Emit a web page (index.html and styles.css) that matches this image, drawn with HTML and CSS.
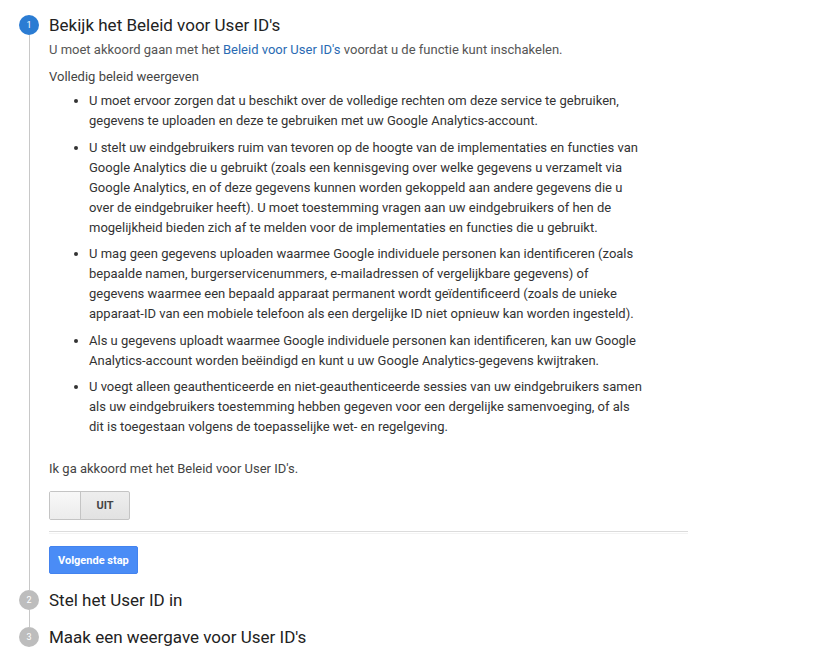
FILE: index.html
```html
<!DOCTYPE html>
<html lang="nl">
<head>
    <meta charset="UTF-8">
    <title>User ID instellen</title>
    <link rel="stylesheet" href="styles.css">
</head>
<body>
<div class="steps">
    <div class="step">
        <div class="rail">
            <span class="num active">1</span>
            <span class="line"></span>
        </div>
        <div class="body">
            <h2 class="title">Bekijk het Beleid voor User ID's</h2>
            <p class="intro">U moet akkoord gaan met het <a href="#">Beleid voor User ID's</a> voordat u de functie kunt inschakelen.</p>
            <p class="full">Volledig beleid weergeven</p>
            <ul class="policy">
                <li>U moet ervoor zorgen dat u beschikt over de volledige rechten om deze service te gebruiken, gegevens te uploaden en deze te gebruiken met uw Google Analytics-account.</li>
                <li>U stelt uw eindgebruikers ruim van tevoren op de hoogte van de implementaties en functies van Google Analytics die u gebruikt (zoals een kennisgeving over welke gegevens u verzamelt via Google Analytics, en of deze gegevens kunnen worden gekoppeld aan andere gegevens die u over de eindgebruiker heeft). U moet toestemming vragen aan uw eindgebruikers of hen de mogelijkheid bieden zich af te melden voor de implementaties en functies die u gebruikt.</li>
                <li>U mag geen gegevens uploaden waarmee Google individuele personen kan identificeren (zoals bepaalde namen, burgerservicenummers, e-mailadressen of vergelijkbare gegevens) of gegevens waarmee een bepaald apparaat permanent wordt geïdentificeerd (zoals de unieke apparaat-ID van een mobiele telefoon als een dergelijke ID niet opnieuw kan worden ingesteld).</li>
                <li>Als u gegevens uploadt waarmee Google individuele personen kan identificeren, kan uw Google Analytics-account worden beëindigd en kunt u uw Google Analytics-gegevens kwijtraken.</li>
                <li>U voegt alleen geauthenticeerde en niet-geauthenticeerde sessies van uw eindgebruikers samen als uw eindgebruikers toestemming hebben gegeven voor een dergelijke samenvoeging, of als dit is toegestaan volgens de toepasselijke wet- en regelgeving.</li>
            </ul>
            <p class="agree">Ik ga akkoord met het Beleid voor User ID's.</p>
            <div class="toggle">
                <span class="knob"></span>
                <span class="state">UIT</span>
            </div>
            <div class="sep"></div>
            <button class="next">Volgende stap</button>
        </div>
    </div>
    <div class="step">
        <div class="rail">
            <span class="num">2</span>
            <span class="line"></span>
        </div>
        <div class="body">
            <h2 class="title">Stel het User ID in</h2>
        </div>
    </div>
    <div class="step last">
        <div class="rail">
            <span class="num">3</span>
        </div>
        <div class="body">
            <h2 class="title">Maak een weergave voor User ID's</h2>
        </div>
    </div>
</div>
</body>
</html>
```

FILE: styles.css
```css
* {
    margin: 0;
    padding: 0;
    box-sizing: border-box;
}
body {
    background: #fff;
    font-family: Roboto, "Liberation Sans", Arial, sans-serif;
    font-size: 13px;
    line-height: 20px;
    color: #333;
}
.steps {
    padding: 14px 0 0 19px;
}
.step {
    display: flex;
    gap: 10px;
    padding-bottom: 15px;
}
.step.last {
    padding-bottom: 0;
}
.rail {
    width: 20px;
    display: flex;
    flex-direction: column;
    align-items: center;
}
.num {
    width: 20px;
    height: 20px;
    margin-top: 1px;
    border-radius: 50%;
    background: #bdbdbd;
    color: #fff;
    font-size: 9px;
    line-height: 20px;
    text-align: center;
    flex: none;
}
.num.active {
    background: #2b7cd3;
}
.line {
    flex: 1;
    width: 1px;
    background: #c8c8c8;
    margin-bottom: -16px;
}
.body {
    width: 639px;
}
.title {
    font-size: 17px;
    font-weight: normal;
    line-height: 22px;
    color: #222;
}
.intro {
    margin-top: 4px;
    color: #555;
}
.intro a {
    color: #2a6bb3;
    text-decoration: none;
}
.full {
    margin-top: 7px;
    color: #444;
}
.policy {
    width: 596px;
    margin-top: 4px;
    padding-left: 40px;
}
.policy li {
    margin-bottom: 6.5px;
}
.agree {
    margin-top: 22px;
    color: #444;
}
.toggle {
    margin-top: 12px;
    width: 81px;
    height: 29px;
    display: flex;
    border: 1px solid #c4c4c4;
    border-radius: 2px;
    background: linear-gradient(#eeeeee, #e2e2e2);
}
.knob {
    width: 31px;
    border-right: 1px solid #c4c4c4;
    background: linear-gradient(#f8f8f8, #ececec);
}
.state {
    flex: 1;
    text-align: center;
    font-size: 11px;
    font-weight: bold;
    line-height: 27px;
    color: #444;
}
.sep {
    margin-top: 11px;
    height: 3px;
    border-top: 1px solid #dcdcdc;
    border-bottom: 1px solid #f4f4f4;
}
.next {
    margin-top: 12px;
    height: 28px;
    padding: 0 8px;
    border: 1px solid #4383ef;
    border-radius: 2px;
    background: #4a8cf6;
    color: #fff;
    font-family: inherit;
    font-size: 11px;
    font-weight: bold;
    cursor: pointer;
}
```
